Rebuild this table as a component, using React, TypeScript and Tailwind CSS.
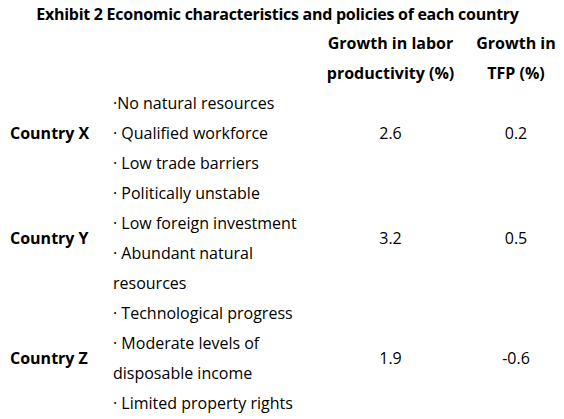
const rows = [
  {
    name: 'Country X',
    items: ['·No natural resources', '· Qualified workforce', '· Low trade barriers'],
    labor: '2.6',
    tfp: '0.2',
  },
  {
    name: 'Country Y',
    items: ['· Politically unstable', '· Low foreign investment', '· Abundant natural resources'],
    labor: '3.2',
    tfp: '0.5',
  },
  {
    name: 'Country Z',
    items: ['· Technological progress', '· Moderate levels of disposable income', '· Limited property rights'],
    labor: '1.9',
    tfp: '-0.6',
  },
];

export default function App() {
  return (
    <div className="w-[564px] h-[419px] bg-white text-black text-[16px] leading-[30px] font-['Open_Sans',sans-serif] overflow-hidden">
      <h1 className="-mt-px pr-[9px] text-center font-bold tracking-[-0.27px]">Exhibit 2 Economic characteristics and policies of each country</h1>

      <div className="-mt-px grid grid-cols-[113px_200px_155px_96px]">
        {/* Header */}
        <div />
        <div />
        <div className="text-center font-bold">
          Growth in labor
          <br />
          productivity (%)
        </div>
        <div className="text-center font-bold">
          Growth in
          <br />
          TFP (%)
        </div>

        {rows.map((r) => (
          <Row key={r.name} {...r} />
        ))}
      </div>
    </div>
  );
}

function Row({ name, items, labor, tfp }: { name: string; items: string[]; labor: string; tfp: string }) {
  return (
    <>
      <div className="flex items-center pl-[10px] font-bold">{name}</div>
      <div className="pr-2">
        {items.map((t) => (
          <p key={t}>{t}</p>
        ))}
      </div>
      <div className="flex items-center justify-center">{labor}</div>
      <div className="flex items-center justify-center">{tfp}</div>
    </>
  );
}
